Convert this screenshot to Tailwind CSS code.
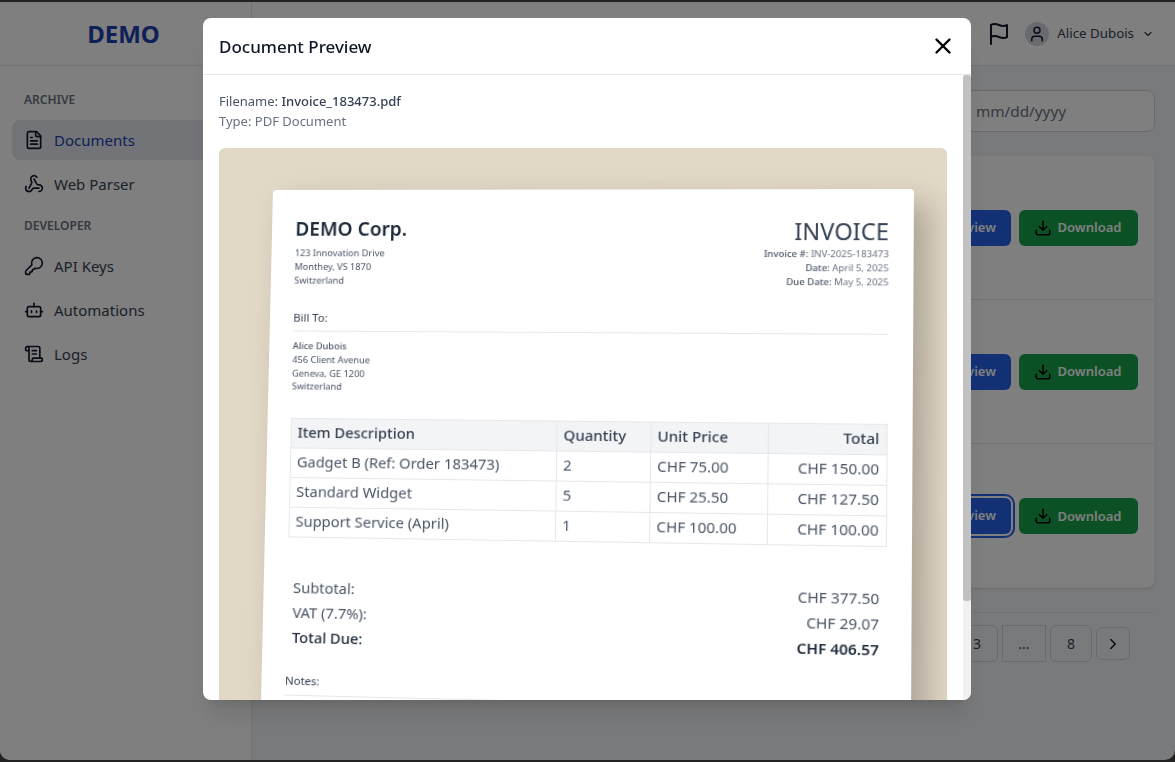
<!DOCTYPE html>
<html lang="en">
<head>
    <meta charset="UTF-8">
    <meta name="viewport" content="width=device-width, initial-scale=1.0">
    <title>Document Preview</title>
    <script src="https://cdn.jsdelivr.net/npm/@tailwindcss/browser@4"></script>
</head>
<body class="bg-[#444] h-[762px] overflow-hidden font-['Noto_Sans',sans-serif]">
    <!-- app behind the modal -->
    <div class="h-[758px] mt-[2px] flex bg-gray-100 rounded-br-[10px] rounded-bl-[10px] overflow-hidden">
        <aside class="w-[252px] shrink-0 bg-white border-r border-gray-200">
            <div class="h-[64px] border-b border-gray-200 flex items-center justify-center pr-1">
                <span class="text-2xl font-bold text-[#1e40af]">DEMO</span>
            </div>
            <nav class="px-3 pt-[25px] text-[15px] text-gray-700">
                <p class="px-3 text-xs font-semibold text-gray-500 h-[18px] leading-[18px]">ARCHIVE</p>
                <a class="flex items-center gap-[10px] h-10 px-3 mt-[11px] rounded-lg bg-[#e4e8ee] text-[#1e40af]">
                    <svg class="w-5 h-5 text-gray-900" viewBox="0 0 24 24" fill="none" stroke="currentColor" stroke-width="2" stroke-linecap="round" stroke-linejoin="round"><path d="M15 2H6a2 2 0 0 0-2 2v16a2 2 0 0 0 2 2h12a2 2 0 0 0 2-2V7Z"/><path d="M14 2v4a2 2 0 0 0 2 2h4"/><path d="M10 9H8"/><path d="M16 13H8"/><path d="M16 17H8"/></svg>
                    Documents
                </a>
                <a class="flex items-center gap-[10px] h-10 px-3 mt-1">
                    <svg class="w-5 h-5 text-gray-900" viewBox="0 0 24 24" fill="none" stroke="currentColor" stroke-width="2" stroke-linecap="round" stroke-linejoin="round"><path d="M18 16.98h-5.99c-1.1 0-1.95.94-2.48 1.9A4 4 0 0 1 2 17c.01-.7.2-1.4.57-2"/><path d="m6 17 3.13-5.78c.53-.97.1-2.18-.5-3.1a4 4 0 1 1 6.89-4.06"/><path d="m12 6 3.13 5.73C15.66 12.7 16.9 13 18 13a4 4 0 0 1 0 8"/></svg>
                    Web Parser
                </a>
                <p class="px-3 text-xs font-semibold text-gray-500 h-[18px] leading-[18px] mt-[13px]">DEVELOPER</p>
                <a class="flex items-center gap-[10px] h-10 px-3 mt-[11px]">
                    <svg class="w-5 h-5 text-gray-900" viewBox="0 0 24 24" fill="none" stroke="currentColor" stroke-width="2" stroke-linecap="round" stroke-linejoin="round"><path d="M2.586 17.414A2 2 0 0 0 2 18.828V21a1 1 0 0 0 1 1h3a1 1 0 0 0 1-1v-1a1 1 0 0 1 1-1h1a1 1 0 0 0 1-1v-1a1 1 0 0 1 1-1h.172a2 2 0 0 0 1.414-.586l.814-.814a6.5 6.5 0 1 0-4-4z"/></svg>
                    API Keys
                </a>
                <a class="flex items-center gap-[10px] h-10 px-3 mt-1">
                    <svg class="w-5 h-5 text-gray-900" viewBox="0 0 24 24" fill="none" stroke="currentColor" stroke-width="2" stroke-linecap="round" stroke-linejoin="round"><path d="M12 8V4"/><rect width="16" height="12" x="4" y="8" rx="2"/><path d="M2 14h2"/><path d="M20 14h2"/><path d="M15 13v2"/><path d="M9 13v2"/></svg>
                    Automations
                </a>
                <a class="flex items-center gap-[10px] h-10 px-3 mt-1">
                    <svg class="w-5 h-5 text-gray-900" viewBox="0 0 24 24" fill="none" stroke="currentColor" stroke-width="2" stroke-linecap="round" stroke-linejoin="round"><path d="M15 12h-5"/><path d="M15 8h-5"/><path d="M19 17V5a2 2 0 0 0-2-2H4"/><path d="M8 21h12a2 2 0 0 0 2-2v-1a1 1 0 0 0-1-1H11a1 1 0 0 0-1 1v1a2 2 0 1 1-4 0V5a2 2 0 1 0-4 0v2a1 1 0 0 0 1 1h3"/></svg>
                    Logs
                </a>
            </nav>
        </aside>
        <div class="flex-1 min-w-0 flex flex-col">
            <header class="h-[64px] shrink-0 bg-white border-b border-gray-200 flex items-center justify-end gap-[14px] pr-[21px]">
                <svg class="w-6 h-6 text-gray-900" viewBox="0 0 24 24" fill="none" stroke="currentColor" stroke-width="2" stroke-linecap="round" stroke-linejoin="round"><path d="M4 15s1-1 4-1 5 2 8 2 4-1 4-1V3s-1 1-4 1-5-2-8-2-4 1-4 1z"/><line x1="4" x2="4" y1="22" y2="15"/></svg>
                <div class="flex items-center text-[13.3px] text-gray-700">
                    <span class="w-6 h-6 mr-2 rounded-full bg-gray-300 flex items-center justify-center text-gray-900">
                        <svg class="w-[18px] h-[18px]" viewBox="0 0 24 24" fill="none" stroke="currentColor" stroke-width="2" stroke-linecap="round" stroke-linejoin="round"><path d="M19 21v-2a4 4 0 0 0-4-4H9a4 4 0 0 0-4 4v2"/><circle cx="12" cy="7" r="4"/></svg>
                    </span>
                    Alice Dubois
                    <svg class="w-3 h-3 ml-2" viewBox="0 0 24 24" fill="none" stroke="currentColor" stroke-width="2.5" stroke-linecap="round" stroke-linejoin="round"><path d="m6 9 6 6 6-6"/></svg>
                </div>
            </header>
            <main class="flex-1 px-5 pt-6 min-h-0">
                <div class="flex justify-end">
                    <div class="w-[300px] h-[42px] bg-white border border-gray-300 rounded-lg flex items-center pl-[120px] text-[15.3px] text-gray-500">mm/dd/yyyy</div>
                </div>
                <div class="mt-[23px] bg-white rounded-lg shadow-sm border border-gray-100 h-[433px]">
                    <div class="h-[144px] border-b border-gray-200 flex items-center justify-end gap-2 pr-4">
                        <button class="h-9 px-[15px] rounded-md bg-[#2563eb] text-[13px] font-semibold text-white">Preview</button>
                        <button class="h-9 w-[119px] rounded-md bg-[#16a34a] text-[13px] font-semibold text-white flex items-center justify-center gap-[6px] pr-[2px]"><svg class="w-[18px] h-[18px] text-black" viewBox="0 0 24 24" fill="none" stroke="currentColor" stroke-width="2" stroke-linecap="round" stroke-linejoin="round"><path d="M21 15v4a2 2 0 0 1-2 2H5a2 2 0 0 1-2-2v-4"/><polyline points="7 10 12 15 17 10"/><line x1="12" x2="12" y1="15" y2="3"/></svg><span class="pt-[1px]">Download</span></button>
                    </div>
                    <div class="h-[144px] border-b border-gray-200 flex items-center justify-end gap-2 pr-4">
                        <button class="h-9 px-[15px] rounded-md bg-[#2563eb] text-[13px] font-semibold text-white">Preview</button>
                        <button class="h-9 w-[119px] rounded-md bg-[#16a34a] text-[13px] font-semibold text-white flex items-center justify-center gap-[6px] pr-[2px]"><svg class="w-[18px] h-[18px] text-black" viewBox="0 0 24 24" fill="none" stroke="currentColor" stroke-width="2" stroke-linecap="round" stroke-linejoin="round"><path d="M21 15v4a2 2 0 0 1-2 2H5a2 2 0 0 1-2-2v-4"/><polyline points="7 10 12 15 17 10"/><line x1="12" x2="12" y1="15" y2="3"/></svg><span class="pt-[1px]">Download</span></button>
                    </div>
                    <div class="h-[144px] flex items-center justify-end gap-2 pr-4">
                        <button class="h-9 px-[15px] rounded-md bg-[#2563eb] text-[13px] font-semibold text-white ring-2 ring-white outline-2 outline-offset-2 outline-[#2563eb]">Preview</button>
                        <button class="h-9 w-[119px] rounded-md bg-[#16a34a] text-[13px] font-semibold text-white flex items-center justify-center gap-[6px] pr-[2px]"><svg class="w-[18px] h-[18px] text-black" viewBox="0 0 24 24" fill="none" stroke="currentColor" stroke-width="2" stroke-linecap="round" stroke-linejoin="round"><path d="M21 15v4a2 2 0 0 1-2 2H5a2 2 0 0 1-2-2v-4"/><polyline points="7 10 12 15 17 10"/><line x1="12" x2="12" y1="15" y2="3"/></svg><span class="pt-[1px]">Download</span></button>
                    </div>
                </div>
                <div class="mt-6 border-t border-gray-200 pt-3 pr-[25px] flex justify-end items-center text-sm text-gray-700">
                    <span class="w-[42px] h-[37px] border border-gray-300 rounded-md flex items-center justify-center">3</span>
                    <span class="w-[44px] h-[37px] ml-1 border border-gray-300 flex items-center justify-center">...</span>
                    <span class="w-[42px] h-[37px] ml-1 border border-gray-300 rounded-md flex items-center justify-center">8</span>
                    <span class="w-[34px] h-[33px] ml-1 border border-gray-300 rounded-md flex items-center justify-center text-gray-900">
                        <svg class="w-[18px] h-[18px]" viewBox="0 0 24 24" fill="none" stroke="currentColor" stroke-width="2" stroke-linecap="round" stroke-linejoin="round"><path d="m9 18 6-6-6-6"/></svg>
                    </span>
                </div>
            </main>
        </div>
    </div>

    <!-- overlay -->
    <div class="fixed inset-0 bg-black/50"></div>

    <!-- preview modal -->
    <div class="fixed left-[203px] top-[18px] w-[768px] h-[682px] bg-white rounded-lg overflow-hidden flex flex-col shadow-xl">
        <div class="h-[57px] shrink-0 border-b border-gray-200 flex items-center justify-between pl-4 pr-[15px]">
            <h2 class="text-[17px] font-medium text-gray-900 pt-[2px]">Document Preview</h2>
            <svg class="w-[26px] h-[26px] text-black" viewBox="0 0 24 24" fill="none" stroke="currentColor" stroke-width="2.2" stroke-linecap="round"><path d="M18 6 6 18"/><path d="m6 6 12 12"/></svg>
        </div>
        <div class="flex-1 min-h-0 flex">
            <div class="flex-1 min-w-0 overflow-hidden p-4">
                <p class="text-[13px] leading-5 text-gray-600">Filename: <span class="font-medium text-gray-700">Invoice_183473.pdf</span></p>
                <p class="text-[13px] leading-5 text-gray-500">Type: PDF Document</p>
                <div class="mt-[17px] w-[728px] h-[640px] bg-[#e2d8c6] rounded-t-md pl-[54px] pt-[42px] overflow-hidden">
                    <!-- paper is tilted: homography fitted to the corners of the sheet -->
                    <div class="w-[640px] h-[640px] bg-white rounded-sm shadow-[14px_14px_30px_rgba(0,0,0,0.25)] px-6 pt-[26px] text-gray-600 origin-top-left [transform:matrix3d(0.96969,-0.001513,0,-0.00004973,-0.022842,0.97078,0,-0.00002701,0,0,1,0,0,0,0,1)]">
                        <div class="flex justify-between">
                            <div>
                                <p class="text-[19.5px] font-semibold text-gray-800 leading-7">DEMO Corp.</p>
                                <p class="text-[9.4px] leading-[13.8px] mt-1">123 Innovation Drive<br>Monthey, VS 1870<br>Switzerland</p>
                            </div>
                            <div class="text-right">
                                <p class="text-[23px] text-gray-700 leading-8">INVOICE</p>
                                <p class="text-[9.4px] leading-[14px] text-gray-500"><span class="font-medium text-gray-600">Invoice #:</span> INV-2025-183473<br><span class="font-medium text-gray-600">Date:</span> April 5, 2025<br><span class="font-medium text-gray-600">Due Date:</span> May 5, 2025</p>
                            </div>
                        </div>
                        <p class="text-[11.5px] leading-4 mt-[23px] pb-[5px] border-b border-gray-200 text-gray-700">Bill To:</p>
                        <p class="text-[9.4px] leading-[13.8px] mt-2"><span class="font-medium">Alice Dubois</span><br>456 Client Avenue<br>Geneva, GE 1200<br>Switzerland</p>
                        <table class="w-full mt-[25px] text-[14.9px] leading-[21px] border-collapse table-fixed">
                            <thead class="bg-gray-100 text-gray-700 font-medium">
                                <tr><td class="border border-gray-200 px-[6px] pb-[2px] h-[30px] w-[268px]">Item Description</td><td class="border border-gray-200 px-[6px] pb-[2px] w-[93px]">Quantity</td><td class="border border-gray-200 px-[6px] pb-[2px] w-[115px]">Unit Price</td><td class="border border-gray-200 px-[7px] pb-[2px] text-right">Total</td></tr>
                            </thead>
                            <tbody>
                                <tr><td class="border border-gray-200 px-[6px] pb-[2px] h-[30px]">Gadget B (Ref: Order 183473)</td><td class="border border-gray-200 px-[6px] pb-[2px]">2</td><td class="border border-gray-200 px-[6px] pb-[2px]">CHF 75.00</td><td class="border border-gray-200 px-[7px] pb-[2px] text-right">CHF 150.00</td></tr>
                                <tr><td class="border border-gray-200 px-[6px] pb-[2px] h-[30px]">Standard Widget</td><td class="border border-gray-200 px-[6px] pb-[2px]">5</td><td class="border border-gray-200 px-[6px] pb-[2px]">CHF 25.50</td><td class="border border-gray-200 px-[7px] pb-[2px] text-right">CHF 127.50</td></tr>
                                <tr><td class="border border-gray-200 px-[6px] pb-[2px] h-[30px]">Support Service (April)</td><td class="border border-gray-200 px-[6px] pb-[2px]">1</td><td class="border border-gray-200 px-[6px] pb-[2px]">CHF 100.00</td><td class="border border-gray-200 px-[7px] pb-[2px] text-right">CHF 100.00</td></tr>
                            </tbody>
                        </table>
                        <div class="flex justify-between mt-[38px] text-[14.9px] pl-[6px] pr-[7px]">
                            <p class="leading-[25px]">Subtotal:<br>VAT (7.7%):<br><span class="font-medium text-gray-800">Total Due:</span></p>
                            <p class="leading-[25px] text-right">CHF 377.50<br>CHF 29.07<br><span class="font-semibold text-gray-800">CHF 406.57</span></p>
                        </div>
                        <p class="text-[11.5px] leading-4 mt-[23px] pb-[6px] border-b border-gray-200 text-gray-700">Notes:</p>
                    </div>
                </div>
            </div>
            <div class="w-2 shrink-0 bg-[#f1f1f1]">
                <div class="h-[526px] bg-[#c1c1c1] rounded-[3px]"></div>
            </div>
        </div>
    </div>
</body>
</html>
